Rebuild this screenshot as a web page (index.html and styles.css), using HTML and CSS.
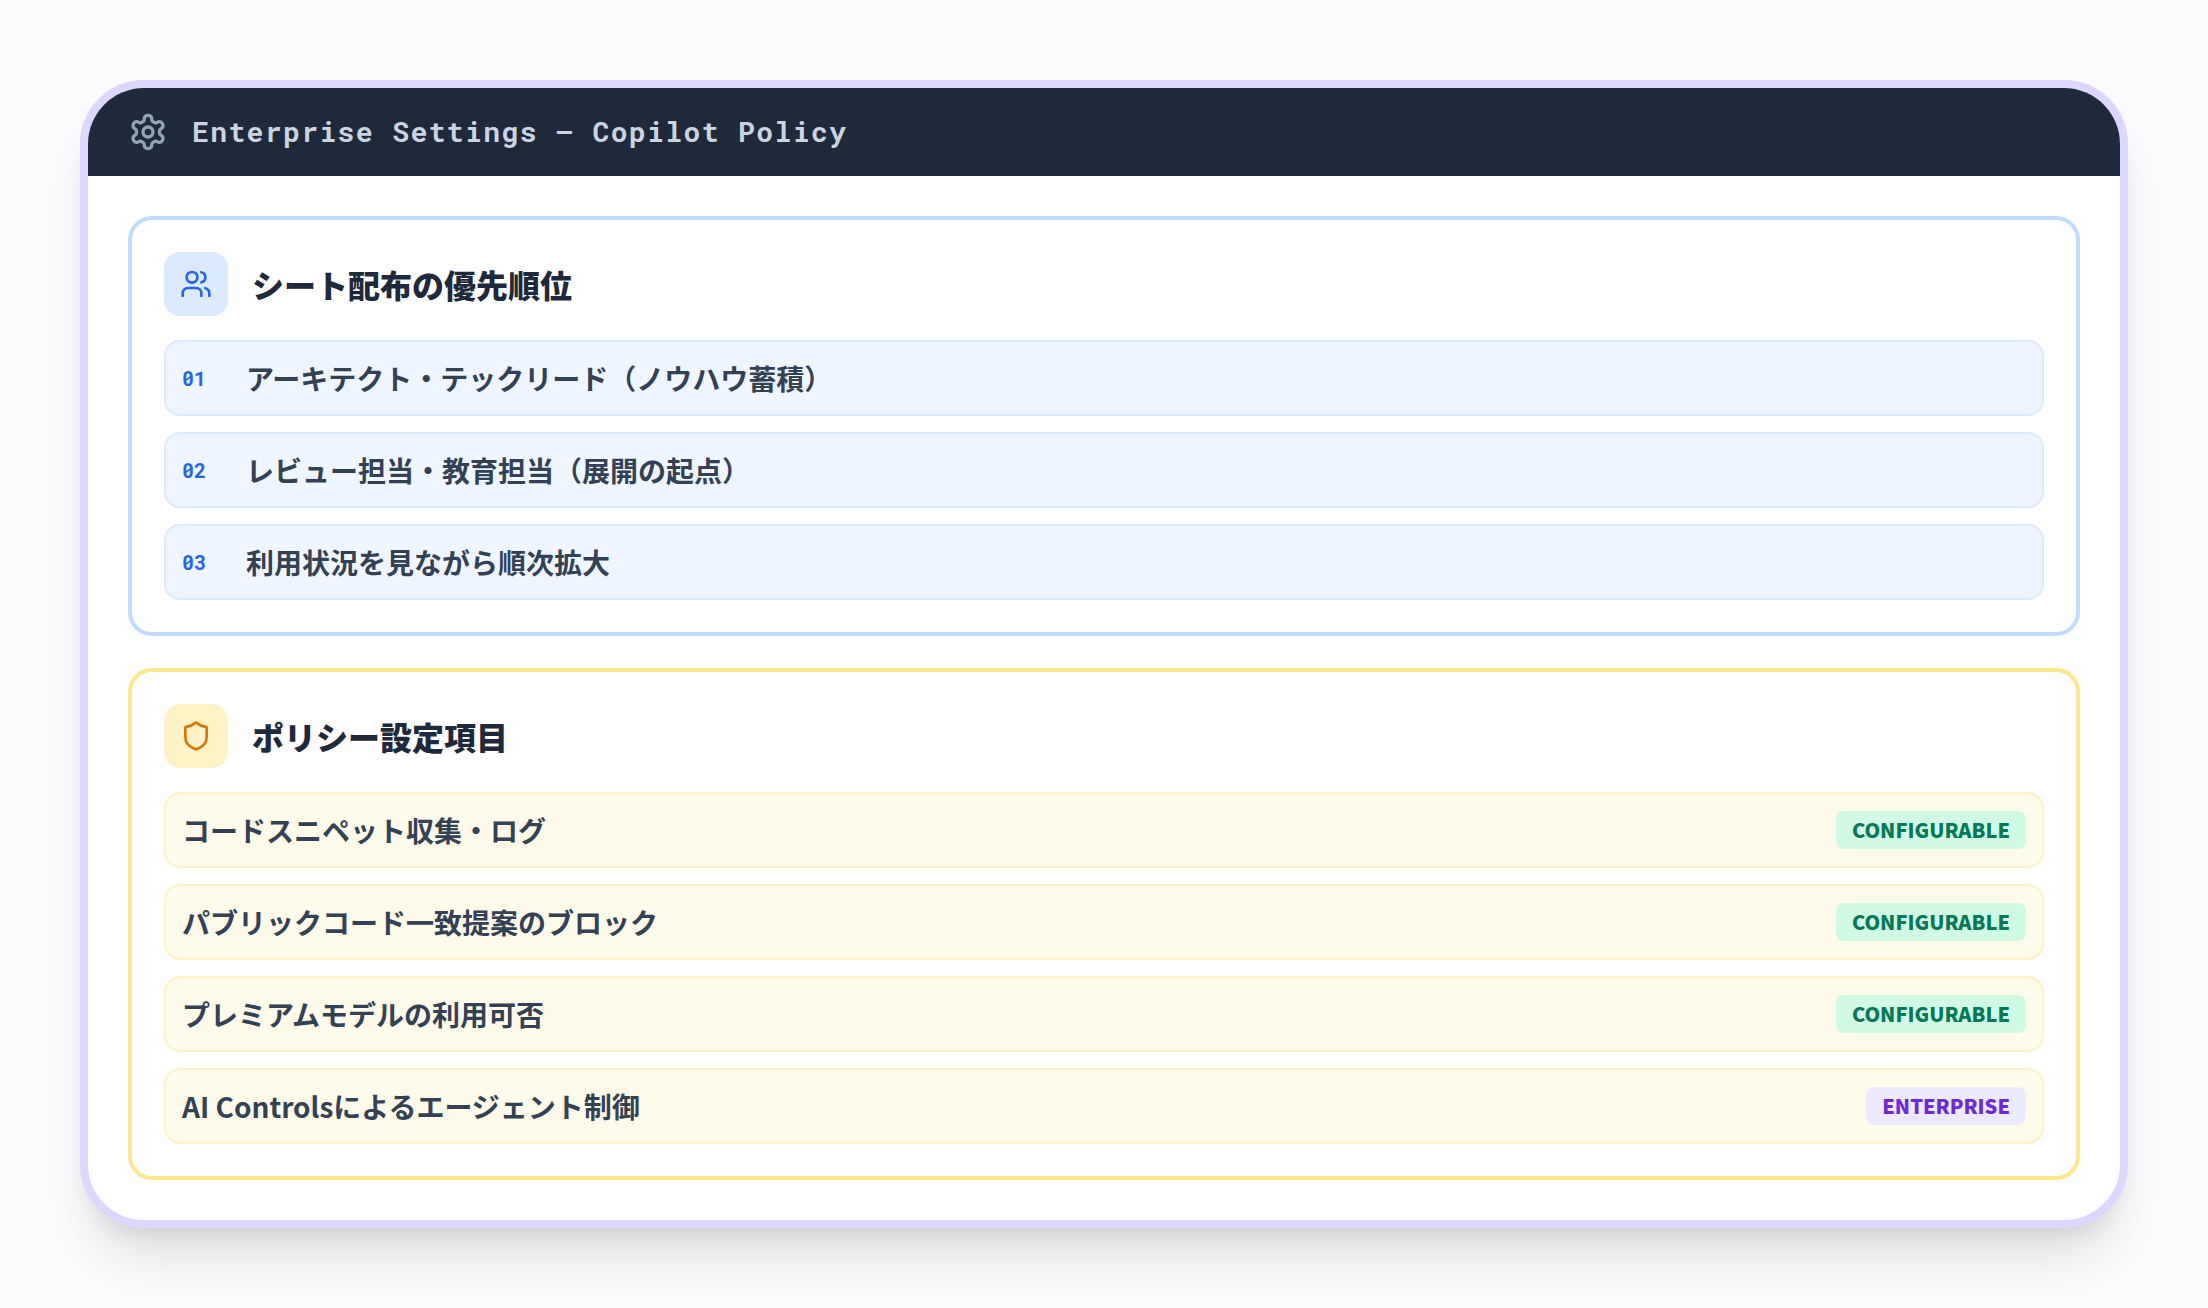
FILE: index.html
```html
<!DOCTYPE html>
<html lang="ja">
<head>
  <meta charset="utf-8">
  <meta name="viewport" content="width=device-width, initial-scale=1">
  <title>Enterprise Settings — Copilot Policy</title>
  <link rel="stylesheet" href="styles.css">
</head>
<body>
  <main class="window">
    <header class="window-bar">
      <svg class="icon icon-gear" viewBox="0 0 24 24" aria-hidden="true">
        <path d="M12.220 2h-.440a2 2 0 0 0-2 2v.180a2 2 0 0 1-1 1.730l-.430.250a2 2 0 0 1-2 0l-.150-.080a2 2 0 0 0-2.730.730l-.220.380a2 2 0 0 0 .730 2.730l.150.100a2 2 0 0 1 1 1.720v.510a2 2 0 0 1-1 1.740l-.150.090a2 2 0 0 0-.730 2.730l.220.380a2 2 0 0 0 2.730.730l.150-.080a2 2 0 0 1 2 0l.430.250a2 2 0 0 1 1 1.730V20a2 2 0 0 0 2 2h.440a2 2 0 0 0 2-2v-.180a2 2 0 0 1 1-1.730l.430-.250a2 2 0 0 1 2 0l.150.080a2 2 0 0 0 2.730-.730l.220-.390a2 2 0 0 0-.730-2.730l-.150-.080a2 2 0 0 1-1-1.740v-.500a2 2 0 0 1 1-1.740l.150-.090a2 2 0 0 0 .730-2.730l-.220-.380a2 2 0 0 0-2.730-.730l-.150.080a2 2 0 0 1-2 0l-.430-.250a2 2 0 0 1-1-1.730V4a2 2 0 0 0-2-2z"/>
        <circle cx="12" cy="12" r="3"/>
      </svg>
      <h1 class="window-title">Enterprise Settings — Copilot Policy</h1>
    </header>
    <div class="window-body">
      <section class="panel panel-seats">
        <div class="panel-head">
          <span class="panel-icon">
            <svg class="icon" viewBox="0 0 24 24" aria-hidden="true">
              <path d="M16 21v-2a4 4 0 0 0-4-4H6a4 4 0 0 0-4 4v2"/>
              <path d="M16 3.130a4 4 0 0 1 0 7.750"/>
              <path d="M22 21v-2a4 4 0 0 0-3-3.870"/>
              <circle cx="9" cy="7" r="4"/>
            </svg>
          </span>
          <h2 class="panel-title">シート配布の優先順位</h2>
        </div>
        <ol class="rows">
          <li class="row"><span class="row-number">01</span><span>アーキテクト・テックリード（ノウハウ蓄積）</span></li>
          <li class="row"><span class="row-number">02</span><span>レビュー担当・教育担当（展開の起点）</span></li>
          <li class="row"><span class="row-number">03</span><span>利用状況を見ながら順次拡大</span></li>
        </ol>
      </section>
      <section class="panel panel-policy">
        <div class="panel-head">
          <span class="panel-icon">
            <svg class="icon" viewBox="0 0 24 24" aria-hidden="true">
              <path d="M20 13c0 5-3.500 7.500-7.660 8.950a1 1 0 0 1-.670-.010C7.500 20.500 4 18 4 13V6a1 1 0 0 1 1-1c2 0 4.500-1.200 6.240-2.720a1.170 1.170 0 0 1 1.520 0C14.510 3.810 17 5 19 5a1 1 0 0 1 1 1z"/>
            </svg>
          </span>
          <h2 class="panel-title">ポリシー設定項目</h2>
        </div>
        <ul class="rows">
          <li class="row"><span>コードスニペット収集・ログ</span><span class="badge badge-green">CONFIGURABLE</span></li>
          <li class="row"><span>パブリックコード一致提案のブロック</span><span class="badge badge-green">CONFIGURABLE</span></li>
          <li class="row"><span>プレミアムモデルの利用可否</span><span class="badge badge-green">CONFIGURABLE</span></li>
          <li class="row"><span>AI Controlsによるエージェント制御</span><span class="badge badge-violet">ENTERPRISE</span></li>
        </ul>
      </section>
    </div>
  </main>
</body>
</html>
```
FILE: styles.css
```css
*,
*::before,
*::after {
  box-sizing: border-box;
}

body {
  margin: 0;
  padding: 80px;
  background: #fafbfd;
  color: #1e293b;
  font-family: "Noto Sans CJK JP", sans-serif;
}

h1,
h2,
ol,
ul {
  margin: 0;
  padding: 0;
}

.icon {
  width: 32px;
  height: 32px;
  flex: none;
  fill: none;
  stroke: currentColor;
  stroke-width: 2;
  stroke-linecap: round;
  stroke-linejoin: round;
}

.window {
  overflow: hidden;
  border: 8px solid #ddd6fe;
  border-radius: 64px;
  background: #fff;
  box-shadow: 0 40px 50px -10px rgba(0, 0, 0, 0.1), 0 16px 20px -12px rgba(0, 0, 0, 0.1);
}

.window-bar {
  display: flex;
  align-items: center;
  gap: 24px;
  padding: 24px 40px;
  background: #1e293b;
}

.icon-gear {
  width: 40px;
  height: 40px;
  color: #94a3b8;
}

.window-title {
  color: #cbd5e1;
  font-family: "Roboto Mono", "DejaVu Sans Mono", monospace;
  font-size: 28px;
  font-weight: 700;
  line-height: 40px;
  letter-spacing: 0.05em;
}

.window-body {
  display: flex;
  flex-direction: column;
  gap: 32px;
  padding: 40px;
}

.panel {
  padding: 32px;
  border: 4px solid;
  border-radius: 24px;
}

.panel-head {
  display: flex;
  align-items: center;
  gap: 24px;
  margin-bottom: 24px;
}

.panel-icon {
  display: grid;
  place-items: center;
  width: 64px;
  height: 64px;
  flex: none;
  border-radius: 16px;
}

.panel-title {
  font-size: 32px;
  font-weight: 900;
  line-height: 48px;
}

.rows {
  display: flex;
  flex-direction: column;
  gap: 16px;
  list-style: none;
}

.row {
  display: flex;
  align-items: center;
  gap: 16px;
  padding: 16px;
  border: 2px solid;
  border-radius: 16px;
  font-size: 28px;
  font-weight: 700;
  line-height: 40px;
}

.row > span {
  color: #334155;
}

.panel-seats {
  border-color: #bfdbfe;
}

.panel-seats .panel-icon {
  background: #dbeafe;
  color: #2563eb;
}

.panel-seats .row {
  border-color: #dbeafe;
  background: #eff6ff;
}

.row > .row-number {
  width: 48px;
  flex: none;
  color: #2563eb;
  font-family: "Roboto Mono", "DejaVu Sans Mono", monospace;
  font-size: 20px;
}

.panel-policy {
  border-color: #fde68a;
}

.panel-policy .panel-icon {
  background: #fef3c7;
  color: #d97706;
}

.panel-policy .row {
  justify-content: space-between;
  border-color: #fef3c7;
  background: #fffbeb;
}

.row > .badge {
  flex: none;
  padding: 4px 16px;
  border-radius: 8px;
  font-size: 20px;
  font-weight: 900;
  line-height: 30px;
}

.row > .badge-green {
  background: #d1fae5;
  color: #047857;
}

.row > .badge-violet {
  background: #ede9fe;
  color: #6d28d9;
}
```
